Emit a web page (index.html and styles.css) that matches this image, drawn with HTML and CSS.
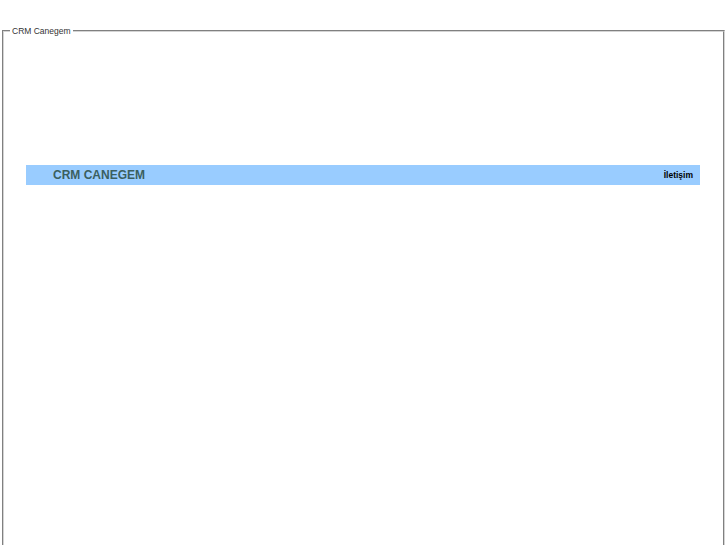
FILE: index.html
```html
<!DOCTYPE html>
<html lang="tr">
<head>
    <meta charset="UTF-8">
    <title>CRM Canegem</title>
    <link rel="stylesheet" href="styles.css">
</head>
<body>
    <fieldset class="frame">
        <legend>CRM Canegem</legend>
        <!-- Header bar -->
        <div class="topbar">
            <span class="brand">CRM CANEGEM</span>
            <a class="contact" href="#">İletişim</a>
        </div>
    </fieldset>
</body>
</html>
```

FILE: styles.css
```css
/* General Styling */
body {
    margin: 0;
    font-family: "Liberation Sans", Arial, sans-serif;
    background: #fff;
}

.frame {
    margin: 26px 2px 0 2px;
    padding: 3px 6px 6px 6px;
    border: 2px groove #d4d4d4;
    font-size: 9px;
    min-height: 560px;
}

.frame legend {
    padding: 0 2px;
    font-size: 8.5px;
    color: #333;
}

.topbar {
    width: 674px;
    height: 20px;
    margin: 126px 0 0 16px;
    background: #99ccff;
    display: flex;
    align-items: center;
    justify-content: space-between;
    padding: 0 7px 0 27px;
    box-sizing: border-box;
}

.brand {
    font-size: 12px;
    font-weight: bold;
    color: #3b5f5f;
}

.contact {
    font-size: 8.5px;
    font-weight: bold;
    color: #000;
    text-decoration: none;
}
```
